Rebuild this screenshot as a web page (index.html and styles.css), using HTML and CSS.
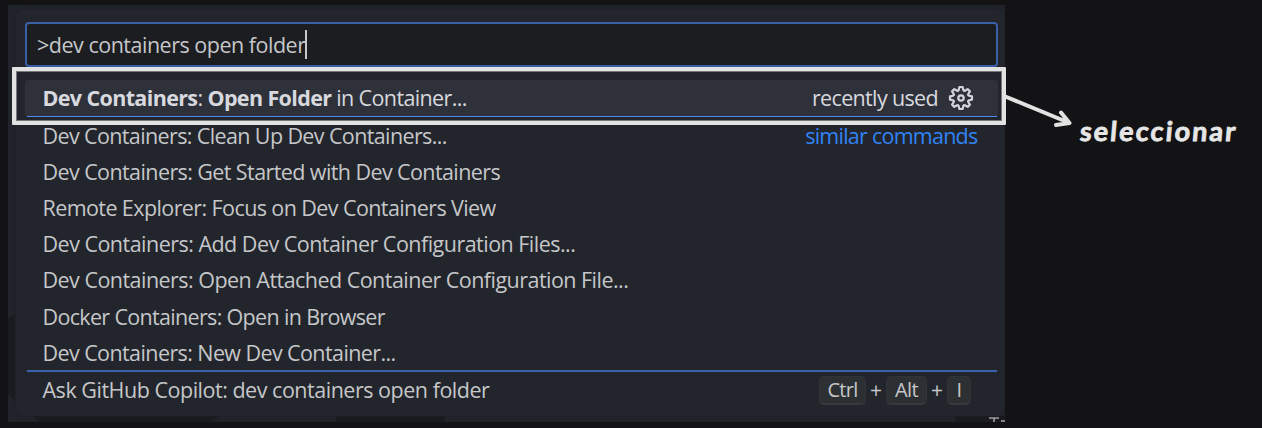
FILE: index.html
```html
<!DOCTYPE html>
<html lang="es">
<head>
<meta charset="utf-8">
<title>Dev Containers</title>
<link rel="stylesheet" href="styles.css">
</head>
<body>
<main class="window">
  <svg class="backdrop" width="997" height="417" viewBox="8 5 997 417" aria-hidden="true">
    <path fill="#191b1f" d="M8 318L15 314V400L8 394ZM33 416H219L211 422H39ZM336 416H445V422H336ZM955 416H1005V422H955Z"/>
    <path fill="none" stroke="#aaa" stroke-width="1.5" d="M989 418H999M994 418V422M1001 421H1005"/>
  </svg>
  <section class="palette">
    <div class="query"><span class="label t0">&gt;dev containers open folder</span><i class="caret"></i></div>
    <div class="row selected">
      <span class="label t1"><b>Dev Containers</b>: <b>Open Folder</b> in Container...</span>
      <span class="recent">recently used</span>
      <svg class="gear" width="26" height="26" viewBox="-13 -13 26 26" aria-hidden="true">
        <defs><path id="tooth" d="M-3-7.3L-2.300-8L-1.600-11H1.600L2.300-8L3-7.300"/></defs>
        <g fill="none" stroke="#d2d4dc" stroke-width="2.2" stroke-linejoin="round" stroke-linecap="round">
          <use href="#tooth"/><use href="#tooth" transform="rotate(45)"/><use href="#tooth" transform="rotate(90)"/><use href="#tooth" transform="rotate(135)"/><use href="#tooth" transform="rotate(180)"/><use href="#tooth" transform="rotate(225)"/><use href="#tooth" transform="rotate(270)"/><use href="#tooth" transform="rotate(315)"/>
          <circle r="2.7"/>
        </g>
      </svg>
    </div>
    <div class="rule first"></div>
    <div class="row second"><span class="label t2">Dev Containers: Clean Up Dev Containers...</span><span class="similar">similar commands</span></div>
    <div class="row"><span class="label t3">Dev Containers: Get Started with Dev Containers</span></div>
    <div class="row"><span class="label t4">Remote Explorer: Focus on Dev Containers View</span></div>
    <div class="row"><span class="label t5">Dev Containers: Add Dev Container Configuration Files...</span></div>
    <div class="row"><span class="label t6">Dev Containers: Open Attached Container Configuration File...</span></div>
    <div class="row"><span class="label t7">Docker Containers: Open in Browser</span></div>
    <div class="row"><span class="label t8">Dev Containers: New Dev Container...</span></div>
    <div class="rule"></div>
    <div class="row ask"><span class="label t9">Ask GitHub Copilot: dev containers open folder</span>
      <span class="keys"><kbd class="ctrl">Ctrl</kbd><span>+</span><kbd class="alt">Alt</kbd><span>+</span><kbd class="letter">I</kbd></span>
    </div>
  </section>
</main>
<div class="frame"></div>
<svg class="arrow" width="80" height="50" viewBox="1000 85 80 50" aria-hidden="true">
  <path fill="none" stroke="#e2e2e2" stroke-width="4" stroke-linecap="round" stroke-linejoin="round" d="M1004 96L1069.500 123M1061 112.500L1069.500 123L1056 125"/>
</svg>
<div class="note">seleccionar</div>
</body>
</html>
```
FILE: styles.css
```css
* { box-sizing: border-box; }
body {
  margin: 0;
  width: 1262px;
  height: 428px;
  overflow: hidden;
  background: #131315;
  padding: 5px 0 0 8px;
  font-family: "Open Sans", "Noto Sans", sans-serif;
  font-size: 21.5px;
  color: #c6c7c9;
}
.window { position: relative; width: 997px; height: 417px; padding: 4px 1px 6px 8px; background: #202329; }
.backdrop { position: absolute; left: 0; top: 0; }
.palette {
  position: relative;
  display: flex;
  flex-direction: column;
  height: 407px;
  padding: 13px 6px 0 9px;
  border-radius: 9px;
  background: #22252c;
  box-shadow: 0 0 3px #1e2025;
}
.query {
  display: flex;
  align-items: center;
  width: 973px;
  height: 45px;
  flex: none;
  padding-left: 10px;
  border: 2px solid #3a5fa6;
  border-radius: 4px;
  background: #1c1d21;
}
.caret { width: 2px; height: 29px; margin-left: -1px; background: #c6c7c9; }
.label { white-space: nowrap; letter-spacing: -.59px; }
.t0 { letter-spacing: -.49px; }
.t1 { letter-spacing: -.63px; }
.t2 { letter-spacing: -.62px; }
.t5 { letter-spacing: -.52px; }
.t6 { letter-spacing: -.53px; }
.t7 { letter-spacing: -.67px; }
.t9 { letter-spacing: -.48px; }
.row { display: flex; align-items: center; height: 36.3px; flex: none; padding-left: 17.5px; line-height: 30px; white-space: nowrap; }
.selected { margin-top: 13px; height: 36px; border-radius: 4px 4px 0 0; background: #2e313a; color: #d8d9df; }
.second { height: 35.4px; }
.recent { margin-left: auto; letter-spacing: -.65px; }
.gear { margin: 0 24px 0 10px; }
.rule { flex: none; height: 2px; margin: -1px 1px 0 2px; background: #3c61ab; }
.rule.first { height: 1px; margin-top: 0; margin-bottom: 1px; background: #4e87f5; }
.similar { margin-left: auto; margin-right: 20.5px; letter-spacing: -.75px; color: #3183f6; }
.keys { display: flex; align-items: center; gap: 4px; margin: 0 27px 0 auto; font-size: 21px; }
kbd {
  height: 29px;
  border: 1px solid #303338;
  border-bottom: 2px solid #363a3e;
  border-radius: 5px;
  background: #2d3033;
  font: 20px/25px "Open Sans", sans-serif;
  letter-spacing: -.7px;
  text-align: center;
}
.ctrl { width: 47px; }
.alt { width: 41px; }
.letter { width: 24px; }
.ask { height: 36.5px; }
.frame { position: absolute; left: 12px; top: 67px; width: 994px; height: 58px; border: 4px solid #e2e2e2; outline: 1px solid #77787b; outline-offset: -5px; border-radius: 1px; }
.arrow { position: absolute; left: 1000px; top: 85px; }
.note {
  position: absolute;
  left: 1080px;
  top: 114px;
  font: 700 27px/34px Lato, sans-serif;
  letter-spacing: 2.1px;
  color: #e6e6e6;
  -webkit-text-stroke: .8px #e6e6e6;
  transform: skewX(-5deg);
}
```
